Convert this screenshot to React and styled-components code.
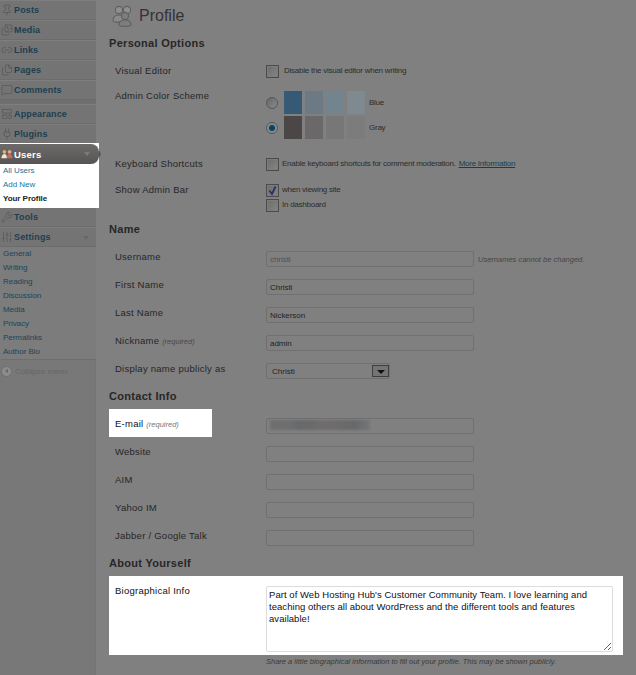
import React from "react";
import styled, { createGlobalStyle } from "styled-components";
import {
	Pin,
	Images,
	Link2,
	Files,
	MessageSquare,
	LayoutTemplate,
	Plug,
	Wrench,
	SlidersVertical,
} from "lucide-react";

const GlobalStyle = createGlobalStyle`
	html, body {
		margin: 0;
		height: 100%;
		background: #808080;
		overflow: hidden;
	}
	body {
		font-family: "Liberation Sans", Arial, sans-serif;
	}
`;

const Page = styled.div`
	display: flex;
	width: 636px;
	height: 675px;
	overflow: hidden;
	background: #808080;
`;

const Sidebar = styled.nav`
	flex: 0 0 96px;
	width: 96px;
	background: #787878;
	box-shadow: inset -1px 0 0 #757575;
`;

const MenuRow = styled.div`
	display: flex;
	align-items: center;
	gap: 1px;
	height: 20px;
	box-sizing: border-box;
	padding-left: 1px;
	border-top: 1px solid #7e7e7e;
	border-bottom: 1px solid #6c6c6c;
	background: #747474;
	color: #1d3f50;
	font-size: 9px;
	font-weight: bold;
	letter-spacing: 0.15px;
	svg {
		flex: none;
		color: #505050;
	}
`;

const MenuDivider = styled.div`
	height: 4px;
	background: #6f6f6f;
`;

const UsersBlock = styled.div`
	position: relative;
	width: 99px;
	height: 64px;
	margin-top: -1px;
	background: #fff;
	box-sizing: border-box;
	padding-top: 1px;
`;

const UsersHead = styled.div`
	position: relative;
	display: flex;
	align-items: center;
	gap: 1px;
	height: 20px;
	padding-left: 1px;
	background: linear-gradient(#6d6a6a, #565454);
	border-radius: 0 8px 8px 0;
	color: #fff;
	font-size: 9.5px;
	font-weight: bold;
	letter-spacing: 0.2px;
	&::after {
		content: "";
		position: absolute;
		left: 99px;
		top: 6px;
		border-top: 4px solid transparent;
		border-bottom: 4px solid transparent;
		border-left: 2px solid #555;
	}
`;

const MenuCaret = styled.span`
	position: absolute;
	right: ${(p) => p.$right}px;
	top: ${(p) => p.$top}px;
	width: 0;
	height: 0;
	border-left: 3px solid transparent;
	border-right: 3px solid transparent;
	border-top: 4px solid ${(p) => p.$color};
`;

const HeadRow = styled(MenuRow)`
	position: relative;
`;

const SubList = styled.div`
	display: flex;
	flex-direction: column;
	padding: ${(p) => (p.$plain ? "0" : "0 0 2px")};
	background: ${(p) => (p.$plain ? "#7c7c7c" : "#fff")};
	border-bottom: ${(p) => (p.$plain ? "1px solid #6e6e6e" : "0")};
`;

const SubLink = styled.a`
	display: block;
	height: 14px;
	line-height: 14px;
	padding-left: 3px;
	font-size: 8px;
	letter-spacing: -0.05px;
	font-weight: ${(p) => (p.$current ? "bold" : "normal")};
	color: ${(p) => p.$color};
	text-decoration: none;
	white-space: nowrap;
`;

const Collapse = styled.div`
	display: flex;
	align-items: center;
	gap: 3px;
	height: 22px;
	padding-left: 1px;
	color: #666;
	font-size: 8px;
	letter-spacing: -0.1px;
`;

const CollapseIcon = styled.span`
	display: flex;
	align-items: center;
	justify-content: center;
	width: 9px;
	height: 9px;
	border-radius: 50%;
	background: #8c8c8c;
	border: 1px solid #707070;
	&::before {
		content: "";
		border-top: 2.5px solid transparent;
		border-bottom: 2.5px solid transparent;
		border-right: 3px solid #666;
	}
`;

const Main = styled.main`
	flex: 1;
	padding-left: 13px;
	color: #222;
`;

const TitleBar = styled.header`
	display: flex;
	align-items: center;
	gap: 4px;
	height: 32px;
	margin-bottom: 3px;
	padding-left: 2px;
	color: #333;
	font-size: 16px;
`;

const SectionTitle = styled.h3`
	margin: ${(p) => p.$top || 0}px 0 ${(p) => p.$bottom ?? 8}px;
	height: 16px;
	line-height: 16px;
	font-size: 11px;
	font-weight: bold;
	letter-spacing: 0.3px;
	color: #272727;
`;

const Row = styled.div`
	display: grid;
	grid-template-columns: 157px 1fr;
	align-items: start;
	height: ${(p) => p.$height || 28}px;
	width: 514px;
	background: ${(p) => (p.$lit ? "#fff" : "transparent")};
`;

const Label = styled.div`
	box-sizing: border-box;
	padding: ${(p) => (p.$lit ? "8px 0 6px 6px" : "5px 0 0 6px")};
	width: ${(p) => (p.$lit ? "103px" : "auto")};
	background: ${(p) => (p.$lit ? "#fff" : "transparent")};
	line-height: 13px;
	font-size: 9.5px;
	letter-spacing: 0.25px;
	color: ${(p) => (p.$lit ? "#111" : "#262626")};
	white-space: nowrap;
`;

const Required = styled.em`
	font-size: 7.5px;
	letter-spacing: 0;
	color: ${(p) => (p.$lit ? "#777" : "#4a4a4a")};
`;

const Field = styled.div`
	display: flex;
	flex-direction: ${(p) => (p.$stack ? "column" : "row")};
	align-items: ${(p) => (p.$stack ? "flex-start" : "center")};
	gap: ${(p) => p.$gap || 0}px;
	padding-top: ${(p) => p.$top ?? 6}px;
	font-size: 8px;
	letter-spacing: -0.25px;
	color: #2c2c2c;
`;

const CheckLine = styled.label`
	display: flex;
	align-items: flex-start;
	gap: ${(p) => p.$gap || 5}px;
	height: 13px;
	line-height: 11px;
	white-space: nowrap;
`;

const CheckBox = styled.span`
	display: block;
	flex: none;
	box-sizing: border-box;
	width: 13px;
	height: 13px;
	border: 1px solid #4b4b4b;
	background: linear-gradient(135deg, #6c6c6c, #858585);
	box-shadow: inset 0 0 0 1px #7c7c7c;
	svg {
		display: block;
	}
`;

const MoreLink = styled.a`
	margin-left: 3px;
	color: #173f4d;
	text-decoration: underline;
`;

const SchemeRow = styled.div`
	display: flex;
	align-items: center;
	height: 23px;
	margin-bottom: 2px;
`;

const Radio = styled.span`
	display: block;
	box-sizing: border-box;
	width: 12px;
	height: 12px;
	margin-right: 6px;
	border-radius: 50%;
	border: 1px solid #575757;
	background: ${(p) =>
		p.$on
			? "radial-gradient(circle, #0c4460 0 2.5px, #1e6a8f 3px, #8a8a8a 3.6px)"
			: "linear-gradient(135deg, #666, #8b8b8b)"};
`;

const Swatch = styled.span`
	display: block;
	width: 18px;
	height: 23px;
	margin-right: 3px;
	background: ${(p) => p.$color};
`;

const SchemeName = styled.span`
	margin-left: 1px;
`;

const TextInput = styled.input`
	display: block;
	box-sizing: border-box;
	width: 208px;
	height: 16px;
	padding: 0 3px;
	border: 1px solid #707070;
	border-radius: 2px;
	background: #808080;
	outline: none;
	font-family: inherit;
	font-size: 8px;
	letter-spacing: -0.05px;
	color: ${(p) => (p.$muted ? "#505050" : "#222")};
`;

const Note = styled.span`
	margin-left: 4px;
	font-size: 7.5px;
	letter-spacing: 0;
	font-style: italic;
	color: #454545;
	white-space: nowrap;
`;

const Select = styled.div`
	display: flex;
	align-items: center;
	justify-content: space-between;
	box-sizing: border-box;
	width: 124px;
	height: 16px;
	padding: 0 0 0 5px;
	border: 1px solid #707070;
	border-radius: 2px;
	font-size: 8px;
	letter-spacing: 0;
	color: #222;
`;

const SelectButton = styled.span`
	display: flex;
	align-items: flex-end;
	justify-content: center;
	box-sizing: border-box;
	width: 17px;
	height: 12px;
	padding-bottom: 2px;
	border: 1px solid #3f3f3f;
	background: #747474;
	&::before {
		content: "";
		border-left: 4px solid transparent;
		border-right: 4px solid transparent;
		border-top: 4px solid #111;
	}
`;

const EmailField = styled.div`
	position: relative;
`;

const EmailBlur = styled.span`
	position: absolute;
	left: 4px;
	top: 2px;
	width: 100px;
	height: 10px;
	background: linear-gradient(90deg, #6f6f6f 0 20%, #66696b 30%, #726d6d 55%, #67696b 85%, #767676);
	filter: blur(1px);
`;

const BioBox = styled.textarea`
	display: block;
	box-sizing: border-box;
	width: 347px;
	height: 66px;
	padding: 2px;
	border: 1px solid #dcdcdc;
	border-radius: 2px;
	outline: none;
	font-family: inherit;
	font-size: 9.5px;
	line-height: 12px;
	letter-spacing: 0.05px;
	color: #111;
	background: #fff;
	resize: both;
`;

const Help = styled.p`
	margin: 0 0 0 157px;
	padding-top: 1px;
	font-size: 7.5px;
	font-style: italic;
	line-height: 11px;
	color: #3a3a3a;
	white-space: nowrap;
`;

const menuTop = [
	["Posts", Pin],
	["Media", Images],
	["Links", Link2],
	["Pages", Files],
	["Comments", MessageSquare],
];

const settingsLinks = [
	"General",
	"Writing",
	"Reading",
	"Discussion",
	"Media",
	"Privacy",
	"Permalinks",
	"Author Bio",
];

const contactRows = ["Website", "AIM", "Yahoo IM", "Jabber / Google Talk"];

function PeopleIcon({ size, color }) {
	return (
		<svg width={size} height={size} viewBox="0 0 24 24" fill="none" stroke={color} strokeWidth="1.1">
			<circle cx="8" cy="6" r="3.6" fill="#8f8f8f" />
			<circle cx="16" cy="6" r="3.6" fill="#8f8f8f" />
			<path d="M2 17c0-4 2.5-6 6-6s6 2 6 6c0 1.5-12 1.5-12 0z" fill="#8a8a8a" />
			<circle cx="14" cy="12" r="3.6" fill="#7d7d7d" />
			<path d="M8 21c0-3.500 2.500-5 6-5s6 1.500 6 5c0 1.800-12 1.800-12 0z" fill="#7d7d7d" />
		</svg>
	);
}

function UsersMenuIcon() {
	return (
		<svg width="12" height="12" viewBox="0 0 14 14">
			<circle cx="4" cy="4.500" r="2.200" fill="#e0b060" />
			<circle cx="10" cy="4.500" r="2.200" fill="#d8a890" />
			<path d="M0.500 12c0-3 1.500-5 3.500-5s3 2 3 5z" fill="#f0e4d0" />
			<path d="M6.500 12c0-3 1.500-5 3.500-5s3.500 2 3.500 5z" fill="#c86a5a" />
		</svg>
	);
}

function Tick() {
	return (
		<svg width="11" height="11" viewBox="0 0 11 11" fill="none" stroke="#2f2f68" strokeWidth="1.800">
			<path d="M2.500 5.500 L5 9 L8.500 1.500" />
		</svg>
	);
}

export default function App() {
	return (
		<Page>
			<GlobalStyle />
			<Sidebar>
				{menuTop.map(([name, Icon]) => (
					<MenuRow key={name}>
						<Icon size={12} strokeWidth={1.2} />
						{name}
					</MenuRow>
				))}
				<MenuDivider />
				<MenuRow>
					<LayoutTemplate size={12} strokeWidth={1.2} />
					Appearance
				</MenuRow>
				<MenuRow>
					<Plug size={12} strokeWidth={1.2} />
					Plugins
				</MenuRow>
				<UsersBlock>
					<UsersHead>
						<UsersMenuIcon />
						Users
					</UsersHead>
					<MenuCaret $right={9} $top={9} $color="#7b7b7b" />
					<SubList>
						<SubLink $color="#21759b">All Users</SubLink>
						<SubLink $color="#21759b">Add New</SubLink>
						<SubLink $current $color="#222">
							Your Profile
						</SubLink>
					</SubList>
				</UsersBlock>
				<MenuRow>
					<Wrench size={12} strokeWidth={1.2} />
					Tools
				</MenuRow>
				<HeadRow>
					<SlidersVertical size={12} strokeWidth={1.2} />
					Settings
					<MenuCaret $right={7} $top={8} $color="#676767" />
				</HeadRow>
				<SubList $plain>
					{settingsLinks.map((name) => (
						<SubLink key={name} $color="#1b4558">
							{name}
						</SubLink>
					))}
				</SubList>
				<Collapse>
					<CollapseIcon />
					Collapse menu
				</Collapse>
			</Sidebar>

			<Main>
				<TitleBar>
					<PeopleIcon size={24} color="#5f5f5f" />
					Profile
				</TitleBar>

				<SectionTitle>Personal Options</SectionTitle>
				<Row $height={25}>
					<Label>Visual Editor</Label>
					<Field>
						<CheckLine>
							<CheckBox />
							Disable the visual editor when writing
						</CheckLine>
					</Field>
				</Row>
				<Row $height={68}>
					<Label>Admin Color Scheme</Label>
					<Field $stack $top={7}>
						<SchemeRow>
							<Radio />
							<Swatch $color="#365a75" />
							<Swatch $color="#6b7a84" />
							<Swatch $color="#72858f" />
							<Swatch $color="#7f8a90" />
							<SchemeName>Blue</SchemeName>
						</SchemeRow>
						<SchemeRow>
							<Radio $on />
							<Swatch $color="#4c4747" />
							<Swatch $color="#6a6868" />
							<Swatch $color="#777777" />
							<Swatch $color="#7c7c7c" />
							<SchemeName>Gray</SchemeName>
						</SchemeRow>
					</Field>
				</Row>
				<Row $height={26}>
					<Label>Keyboard Shortcuts</Label>
					<Field>
						<CheckLine $gap={3}>
							<CheckBox />
							<span>
								Enable keyboard shortcuts for comment moderation.
								<MoreLink>More Information</MoreLink>
							</span>
						</CheckLine>
					</Field>
				</Row>
				<Row $height={42}>
					<Label>Show Admin Bar</Label>
					<Field $stack $gap={2}>
						<CheckLine $gap={3}>
							<CheckBox>
								<Tick />
							</CheckBox>
							when viewing site
						</CheckLine>
						<CheckLine $gap={3}>
							<CheckBox />
							In dashboard
						</CheckLine>
					</Field>
				</Row>

				<SectionTitle $top={1}>Name</SectionTitle>
				<Row>
					<Label>Username</Label>
					<Field>
						<TextInput $muted readOnly value="christi" />
						<Note>Usernames cannot be changed.</Note>
					</Field>
				</Row>
				<Row>
					<Label>First Name</Label>
					<Field>
						<TextInput readOnly value="Christi" />
					</Field>
				</Row>
				<Row>
					<Label>Last Name</Label>
					<Field>
						<TextInput readOnly value="Nickerson" />
					</Field>
				</Row>
				<Row>
					<Label>
						Nickname <Required>(required)</Required>
					</Label>
					<Field>
						<TextInput readOnly value="admin" />
					</Field>
				</Row>
				<Row>
					<Label>Display name publicly as</Label>
					<Field>
						<Select>
							Christi
							<SelectButton />
						</Select>
					</Field>
				</Row>

				<SectionTitle $top={3} $bottom={5}>
					Contact Info
				</SectionTitle>
				<Row $height={31}>
					<Label $lit>
						E-mail <Required $lit>(required)</Required>
					</Label>
					<Field $top={9}>
						<EmailField>
							<TextInput readOnly value="" />
							<EmailBlur />
						</EmailField>
					</Field>
				</Row>
				{contactRows.map((name) => (
					<Row key={name}>
						<Label>{name}</Label>
						<Field>
							<TextInput readOnly value="" />
						</Field>
					</Row>
				))}

				<SectionTitle $top={3} $bottom={5}>
					About Yourself
				</SectionTitle>
				<Row $lit $height={79}>
					<Label $lit>Biographical Info</Label>
					<Field $top={10}>
						<BioBox
							readOnly
							value="Part of Web Hosting Hub's Customer Community Team. I love learning and teaching others all about WordPress and the different tools and features available!"
						/>
					</Field>
				</Row>
				<Help>Share a little biographical information to fill out your profile. This may be shown publicly.</Help>
			</Main>
		</Page>
	);
}
